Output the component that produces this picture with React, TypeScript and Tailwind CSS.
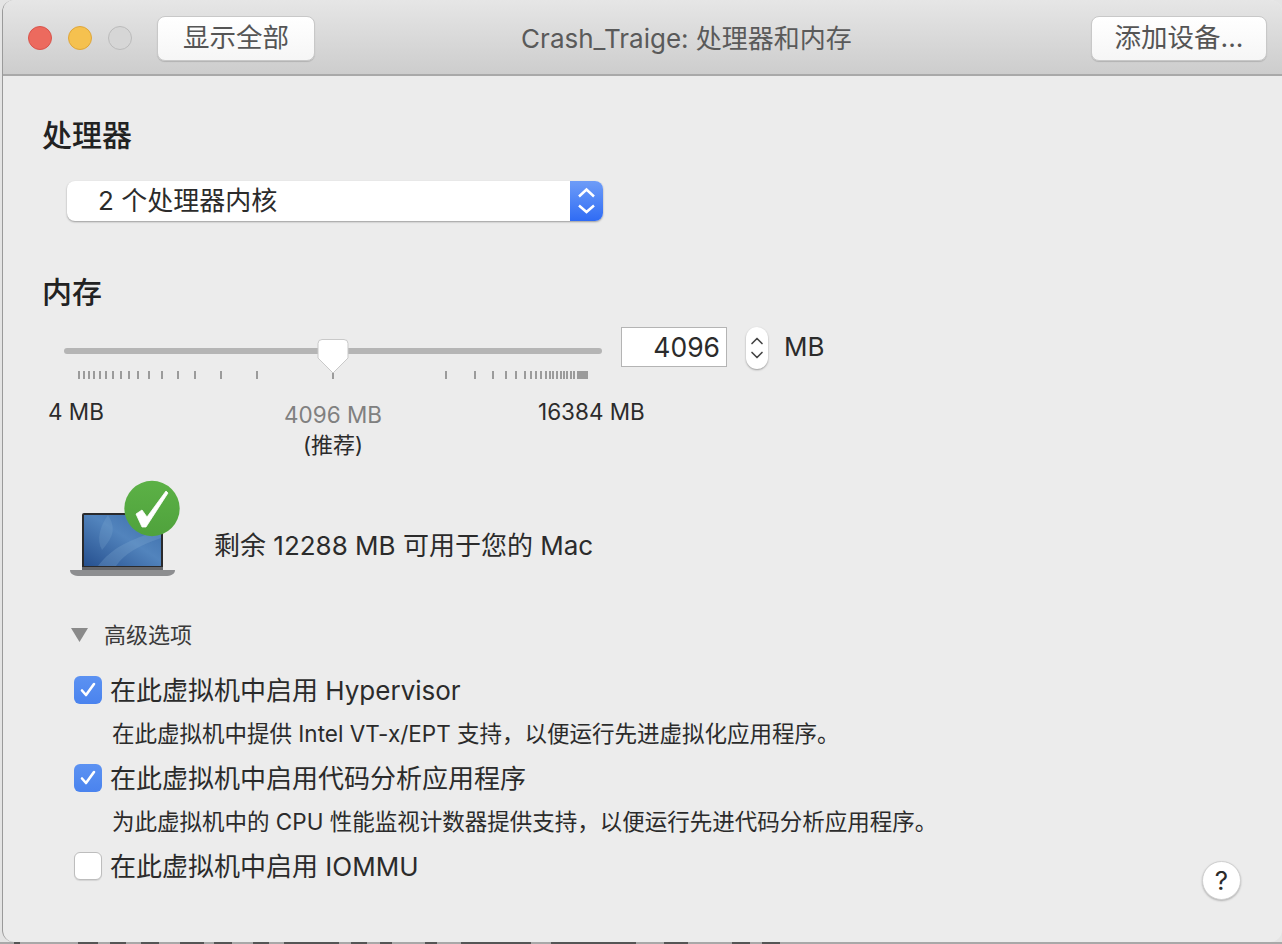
import { ChevronDown, ChevronUp } from 'lucide-react'

const leftTicks = [78, 83, 88, 93, 99, 105, 112, 120, 128, 137, 148, 161, 177, 194, 220, 256, 332]
const rightTicks = [445, 474, 492, 505, 515, 524, 530, 535, 540, 545, 549, 552, 556, 560, 563, 566, 570, 573]
// bits of the page behind the window, seen under its bottom edge
const behind = [[14, 6], [78, 20], [110, 16], [141, 18], [180, 24], [214, 18], [253, 16], [284, 55], [351, 16], [380, 12], [425, 12], [461, 70], [551, 85], [664, 24], [732, 18], [762, 18]]

function Checkbox({ checked }: { checked?: boolean }) {
  if (!checked) {
    return <div className="h-7 w-7 shrink-0 rounded-md border border-[#bdbdbd] bg-white shadow-[0_1px_1px_rgba(0,0,0,0.1)]" />
  }
  return (
    <div className="flex h-7 w-7 shrink-0 items-center justify-center rounded-md bg-gradient-to-b from-[#5c92f2] to-[#4a83ee]">
      <svg width="20" height="20" viewBox="0 0 20 20" fill="none">
        <path d="M4 10.5 L8 15 L16 4" stroke="white" strokeWidth="2.6" strokeLinecap="round" strokeLinejoin="round" />
      </svg>
    </div>
  )
}

function OptionRow({ label, checked }: { label: string; checked?: boolean }) {
  return (
    <div className="flex h-7 items-center gap-[8px] text-[26px] text-[#2b2b2b]">
      <Checkbox checked={checked} />
      <span className="whitespace-nowrap">{label}</span>
    </div>
  )
}

function Button({ label, width }: { label: string; width: string }) {
  return (
    <div className={`flex h-[45px] ${width} items-center justify-center rounded-lg border border-[#c8c8c8] bg-gradient-to-b from-white to-[#f6f6f6] text-[26.5px] text-[#555] shadow-[0_1px_1px_rgba(0,0,0,0.15)]`}>
      {label}
    </div>
  )
}

function MacIcon() {
  return (
    <svg width="110" height="100" viewBox="0 0 110 100" className="shrink-0">
      <defs>
        <linearGradient id="screen" x1="0" y1="1" x2="1" y2="0">
          <stop offset="0" stopColor="#26508f" />
          <stop offset="0.55" stopColor="#5284bd" />
          <stop offset="1" stopColor="#3a6ba8" />
        </linearGradient>
        <linearGradient id="badge" x1="0" y1="0" x2="0" y2="1">
          <stop offset="0" stopColor="#5cb146" />
          <stop offset="1" stopColor="#4fa23c" />
        </linearGradient>
      </defs>
      <rect x="12" y="33" width="81" height="56" rx="2" fill="#2a2a2c" />
      <rect x="14" y="35" width="77" height="51" fill="url(#screen)" />
      <path d="M28 86 C42 68 58 60 91 50 L91 58 C68 66 54 74 46 86 Z" fill="#8ab2d8" opacity="0.25" />
      <path d="M38 35 C46 48 44 56 32 70 C26 60 30 46 38 35 Z" fill="#8ab2d8" opacity="0.22" />
      <path d="M0 90 L105 90 C105 94 101 96 95 96 L10 96 C4 96 0 94 0 90 Z" fill="#8d8e90" />
      <rect x="12" y="87" width="81" height="3" fill="#66676b" />
      <circle cx="82" cy="28.5" r="27.7" fill="url(#badge)" />
      <path d="M66 34 L72 30 L77 37 L96 11 L98 13 L76 47 L72 47 Z" fill="white" stroke="white" strokeWidth="0.8" strokeLinejoin="round" />
    </svg>
  )
}

function MemorySlider() {
  return (
    <div className="relative h-[60px] w-[556px] shrink-0">
      <div className="absolute left-0 top-[21px] h-[6px] w-[538px] rounded-full bg-[#b5b5b5]" />
      <svg className="absolute left-0 top-0" width="556" height="60">
        {leftTicks.concat(rightTicks).map((x) => (
          <rect key={x} x={x - 64} y={44} width={2} height={8} fill="#9b9b9b" />
        ))}
        <rect x={513} y={44} width={11} height={8} fill="#9b9b9b" />
      </svg>
      <svg className="absolute left-[252px] top-[11px]" width="34" height="38" viewBox="0 0 34 38">
        <path d="M6 1.5 H28 Q32 1.5 32 5.5 V20 L17 35 L2 20 V5.5 Q2 1.5 6 1.5 Z" fill="white" stroke="#c9c9c9" strokeWidth="1" />
      </svg>
    </div>
  )
}

export default function App() {
  return (
    <div className="relative h-[944px] w-[1282px] overflow-hidden bg-[#e4e4e4] font-['Inter','Noto_Sans_CJK_SC',sans-serif]">
      <svg className="absolute left-0 top-[942px]" width="1282" height="2">
        <rect width="1282" height="2" fill="#a8a8a8" />
        {behind.map(([x, w]) => (
          <rect key={x} x={x} y={0} width={w} height={2} fill="#555555" />
        ))}
      </svg>
      <div className="relative ml-[2px] flex h-[942px] flex-col overflow-hidden rounded-[12px] border-l border-[#9a9a9a] bg-[#ececec]">
        <div className="flex h-[76px] shrink-0 items-center border-b-2 border-[#a9a9a9] bg-gradient-to-b from-[#e6e6e6] to-[#cdcdcd] pl-[25px] pr-[15px] pt-[2px]">
          <div className="flex items-center gap-4">
            <div className="h-6 w-6 rounded-full border border-[#d9544c] bg-[#ec6a5e]" />
            <div className="h-6 w-6 rounded-full border border-[#dfa63a] bg-[#f5c14f]" />
            <div className="h-6 w-6 rounded-full border border-[#bbb] bg-[#d6d6d6]" />
          </div>
          <div className="ml-[25px]">
            <Button label="显示全部" width="w-[158px]" />
          </div>
          <div className="flex-1 pr-[33px] text-center text-[26px] text-[#5a5a5a]">Crash_Traige: 处理器和内存</div>
          <Button label="添加设备..." width="w-[176px]" />
        </div>

        <div className="relative flex-1 pl-[39px] pt-[43px]">
          <h2 className="text-[30px] font-medium leading-8 text-[#222]">处理器</h2>

          <div className="ml-[25px] mt-[30px] flex h-10 w-[536px] items-stretch overflow-hidden rounded-lg bg-white shadow-[0_1px_2px_rgba(0,0,0,0.35)]">
            <div className="flex-1 pl-[31px] text-[26px] leading-10 text-[#2b2b2b]">2 个处理器内核</div>
            <div className="w-[33px] bg-gradient-to-b from-[#6e9cf7] to-[#2f6bf4]">
              <svg width="33" height="40" viewBox="0 0 33 40" fill="none">
                <path d="M9 15.5 L16.5 8.5 L24 15.5 M9 24.5 L16.5 31 L24 24.5" stroke="white" strokeWidth="2.5" />
              </svg>
            </div>
          </div>

          <h2 className="mt-[55px] text-[30px] font-medium leading-8 text-[#222]">内存</h2>

          <div className="ml-[22px] mt-[19px] flex items-start">
            <MemorySlider />
            <div className="ml-[1px] h-10 w-[106px] border border-[#b4b4b4] bg-white pr-[6px] text-right text-[26.5px] leading-[38px] text-[#2b2b2b]">
              4096
            </div>
            <div className="ml-[19px] flex h-[42px] w-[22px] flex-col items-center justify-center rounded-[11px] bg-white text-[#444] shadow-[0_1px_2px_rgba(0,0,0,0.35)]">
              <ChevronUp size={20} strokeWidth={2} className="-mb-[3px]" />
              <ChevronDown size={20} strokeWidth={2} className="-mt-[3px]" />
            </div>
            <span className="ml-[16px] text-[26px] leading-10 text-[#2b2b2b]">MB</span>
          </div>

          <div className="relative mt-[9px] h-[66px] w-[620px] text-[22.5px] text-[#2b2b2b]">
            <span className="absolute left-[6px] top-0 leading-8">4 MB</span>
            <div className="absolute left-[231px] top-[3px] flex w-[120px] flex-col items-center">
              <span className="leading-8 text-[#808080]">4096 MB</span>
              <span className="text-[22px] leading-7">(推荐)</span>
            </div>
            <span className="absolute left-[496px] top-0 leading-8">16384 MB</span>
          </div>

          <div className="ml-[28px] mt-[18px] flex items-center">
            <MacIcon />
            <span className="ml-[34px] mt-[30px] text-[26px] text-[#2b2b2b]">剩余 12288 MB 可用于您的 Mac</span>
          </div>

          <div className="ml-[29px] mt-[41px] flex items-center">
            <svg width="17" height="14" viewBox="0 0 17 14">
              <path d="M0 0 H17 L8.5 14 Z" fill="#8a8a8a" />
            </svg>
            <span className="ml-[16px] text-[22px] leading-7 text-[#3a3a3a]">高级选项</span>
          </div>

          <div className="ml-[32px] mt-[27px] flex flex-col">
            <OptionRow label="在此虚拟机中启用 Hypervisor" checked />
            <p className="ml-[38px] mt-[16px] text-[22.5px] leading-7 text-[#2b2b2b]">在此虚拟机中提供 Intel VT-x/EPT 支持，以便运行先进虚拟化应用程序。</p>
            <div className="mt-[16px]">
              <OptionRow label="在此虚拟机中启用代码分析应用程序" checked />
            </div>
            <p className="ml-[38px] mt-[16px] text-[22.5px] leading-7 text-[#2b2b2b]">为此虚拟机中的 CPU 性能监视计数器提供支持，以便运行先进代码分析应用程序。</p>
            <div className="mt-[16px]">
              <OptionRow label="在此虚拟机中启用 IOMMU" />
            </div>
          </div>

          <div className="absolute bottom-[42px] right-[41px] flex h-[39px] w-[39px] items-center justify-center rounded-full border border-[#d0d0d0] bg-white text-[26px] text-[#2b2b2b] shadow-[0_1px_2px_rgba(0,0,0,0.25)]">
            ?
          </div>
        </div>
      </div>
    </div>
  )
}
